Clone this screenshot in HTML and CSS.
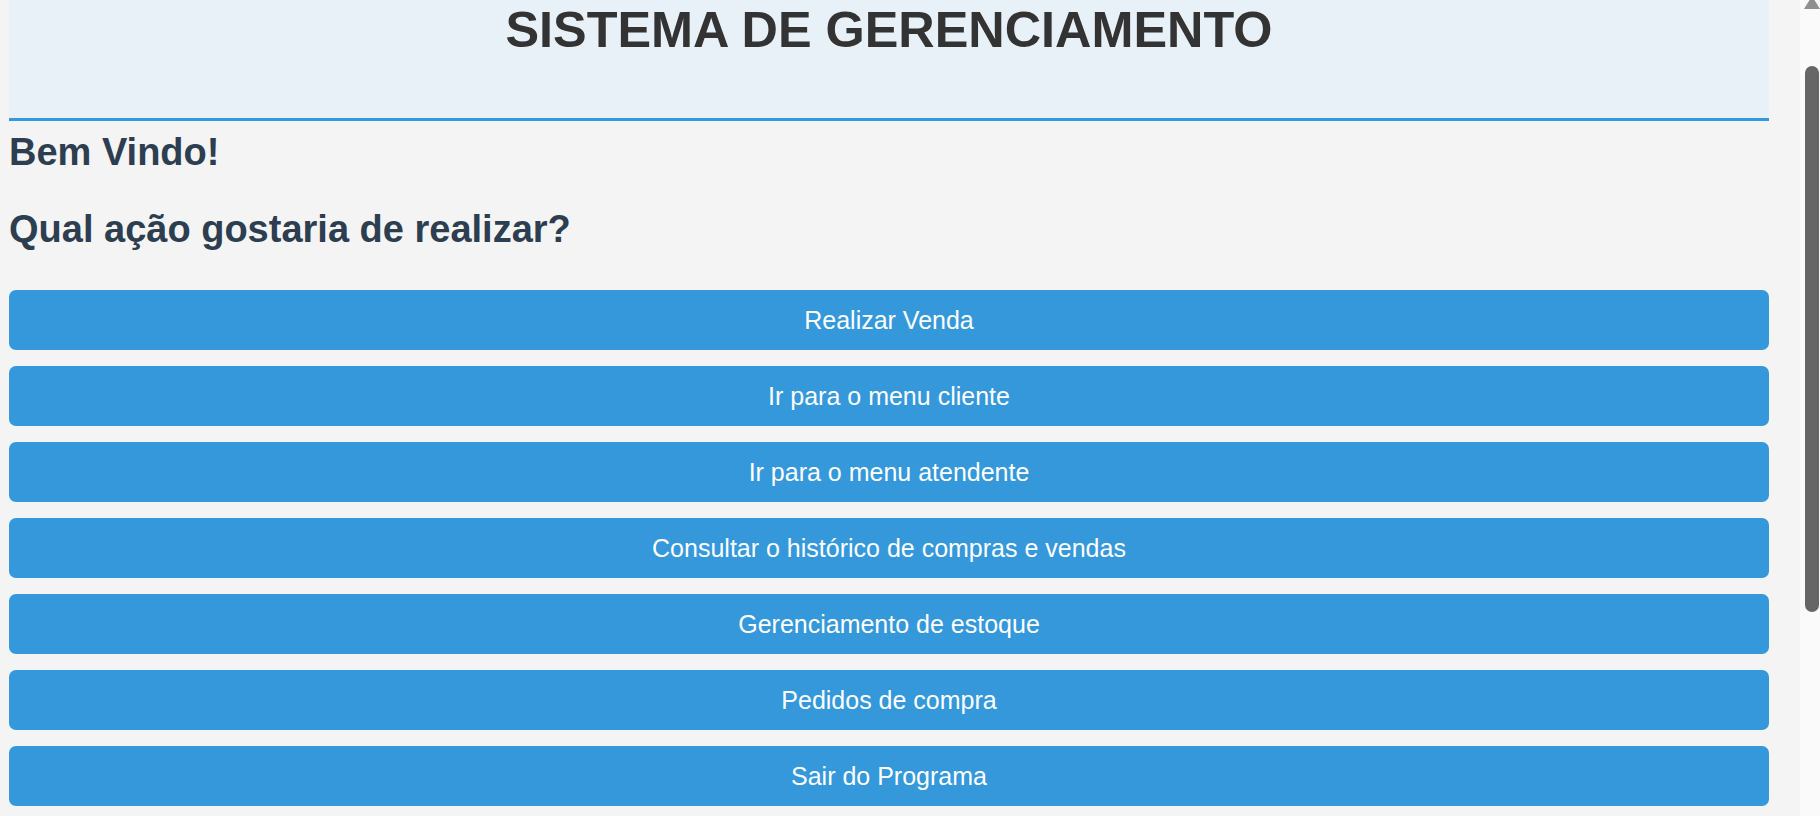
FILE: index.html
```html
<!DOCTYPE html>
<html lang="pt-BR">
<head>
<meta charset="utf-8">
<title>Sistema de Gerenciamento</title>
<link rel="stylesheet" href="styles.css">
</head>
<body>
  <div class="pagina">
    <header class="topo">
      <h1 class="titulo">SISTEMA DE GERENCIAMENTO</h1>
    </header>
    <main class="conteudo">
      <h2 class="saudacao">Bem Vindo!</h2>
      <h2 class="pergunta">Qual ação gostaria de realizar?</h2>
      <nav class="menu">
        <button class="botao">Realizar Venda</button>
        <button class="botao">Ir para o menu cliente</button>
        <button class="botao">Ir para o menu atendente</button>
        <button class="botao">Consultar o histórico de compras e vendas</button>
        <button class="botao">Gerenciamento de estoque</button>
        <button class="botao">Pedidos de compra</button>
        <button class="botao">Sair do Programa</button>
      </nav>
    </main>
  </div>
  <div class="barra-rolagem" aria-hidden="true">
    <div class="seta-cima"></div>
    <div class="polegar"></div>
  </div>
</body>
</html>
```

FILE: styles.css
```css
html,
body {
  margin: 0;
  height: 100%;
}

body {
  display: flex;
  overflow: hidden;
  font-family: "Liberation Sans", Arial, sans-serif;
  background: #f4f4f4;
}

.pagina {
  flex: 1;
  min-width: 0;
  padding: 0 31px 0 9px;
}

.barra-rolagem {
  width: 20px;
  flex: none;
  background: #fafafa;
  display: flex;
  flex-direction: column;
  overflow: hidden;
}

.seta-cima {
  width: 0;
  height: 0;
  margin: -4px 0 0 4px;
  border-left: 8px solid transparent;
  border-right: 8px solid transparent;
  border-bottom: 13px solid #8f8f8f;
}

.polegar {
  width: 14px;
  height: 546px;
  margin: 57px 0 0 5px;
  background: #666666;
  border-radius: 7px;
}

.topo {
  background: #e9f1f8;
  border-bottom: 3px solid #3498db;
  padding: 1px 0 60px;
}

.titulo {
  margin: 0;
  font-size: 50.4px;
  line-height: 57px;
  font-weight: bold;
  color: #333333;
  text-align: center;
}

.conteudo {
  display: flex;
  flex-direction: column;
}

.saudacao,
.pergunta {
  margin: 0;
  font-size: 38px;
  line-height: 42px;
  font-weight: bold;
  color: #2c3e50;
}

.saudacao {
  margin-top: 10px;
}

.pergunta {
  margin-top: 35px;
}

.menu {
  display: flex;
  flex-direction: column;
  gap: 16px;
  margin-top: 40px;
}

.botao {
  height: 60px;
  border: none;
  border-radius: 7px;
  background: #3498db;
  color: #ffffff;
  font-family: "Liberation Sans", Arial, sans-serif;
  font-size: 25px;
  text-align: center;
  padding: 0;
  cursor: pointer;
}
```
